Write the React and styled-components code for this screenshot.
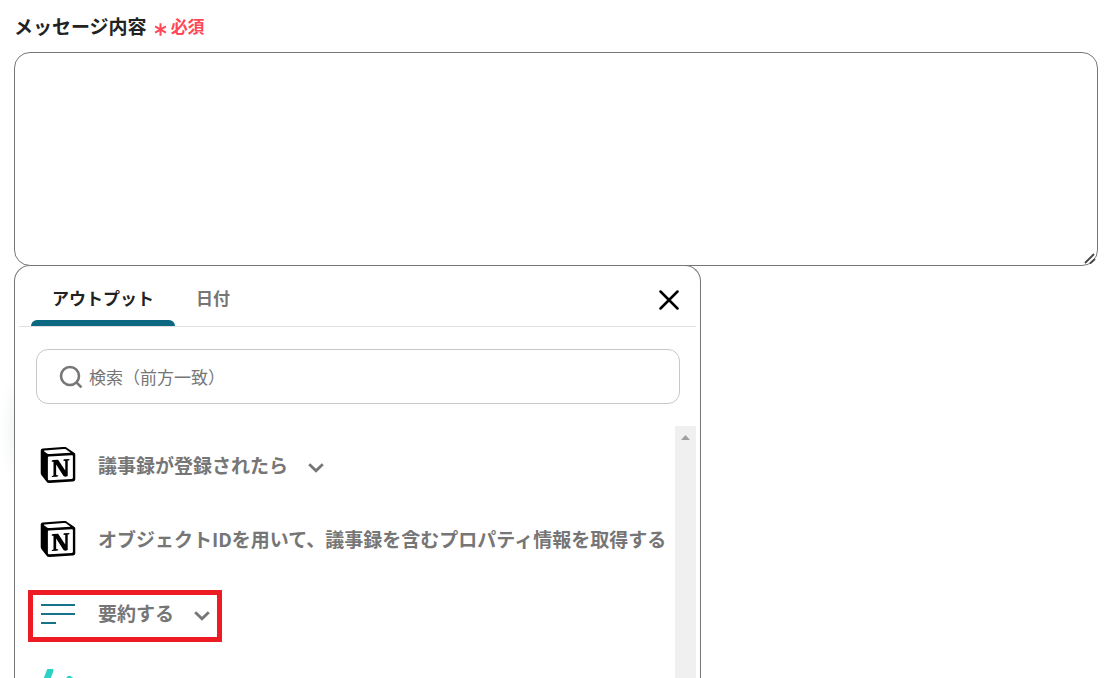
import React, { useState } from 'react';
import styled, { createGlobalStyle } from 'styled-components';
import { SiNotion } from 'react-icons/si';

const GlobalStyle = createGlobalStyle`
  *, *::before, *::after {
    box-sizing: border-box;
  }

  body {
    margin: 0;
    background: #fff;
    color: #222;
    font-family: 'Noto Sans CJK JP', sans-serif;
  }
`;

const Page = styled.main`
  display: flex;
  flex-direction: column;
  height: 100vh;
  padding: 12px 11px 0 14px;
  overflow: hidden;
  background: radial-gradient(ellipse 16px 60px at 16px 430px, #f2f5f4, #fff);
`;

const FieldHeader = styled.div`
  display: flex;
  flex: none;
  align-items: center;
  gap: 7px;
  height: 28px;
  margin-bottom: 12px;
`;

const FieldLabel = styled.label`
  font-size: 19px;
  line-height: 28px;
  font-weight: 700;
`;

const Required = styled.span`
  display: flex;
  align-items: center;
  gap: 4px;
  color: #ff4757;
  font-size: 17px;
  line-height: 28px;
  font-weight: 700;

  svg {
    margin-top: 6px;
  }
`;

const MessageBox = styled.div`
  position: relative;
  display: flex;
  flex: none;
`;

const MessageInput = styled.textarea`
  width: 100%;
  height: 214px;
  padding: 16px;
  border: 1px solid #767676;
  border-radius: 16px;
  background: #fff;
  font: inherit;
  font-size: 17px;
  resize: none;
  outline: none;
`;

const Grip = styled.svg`
  position: absolute;
  right: 1px;
  bottom: 1px;
  pointer-events: none;
`;

const Panel = styled.section`
  display: flex;
  flex: 1;
  flex-direction: column;
  width: 100%;
  max-width: 687px;
  min-height: 0;
  margin-top: -1px;
  padding: 0 4px;
  border: 1px solid #767676;
  border-bottom: 0;
  border-radius: 16px 16px 0 0;
  background: #fff;
`;

const PanelHeader = styled.header`
  display: flex;
  flex: none;
  align-items: stretch;
  justify-content: space-between;
  height: 61px;
  padding: 0 12px;
  border-bottom: 1px solid #e0e0e0;
`;

const Tabs = styled.div`
  display: flex;
`;

const Tab = styled.button`
  display: flex;
  flex-direction: column;
  padding: 0;
  border: 0;
  background: none;
  color: ${({ $active }) => ($active ? '#222' : '#767676')};
  font-family: inherit;
  font-size: 17px;
  line-height: 54px;
  font-weight: 700;
  cursor: pointer;

  span {
    padding: 5px 21px 0;
    margin-bottom: -5px;
  }

  &::after {
    content: '';
    width: 100%;
    height: 6px;
    border-radius: 6px 6px 0 0;
    background: ${({ $active }) => ($active ? '#0b6880' : 'transparent')};
  }
`;

const CloseButton = styled.button`
  display: flex;
  align-items: center;
  padding: 8px 5px 0;
  border: 0;
  background: none;
  color: #000;
  cursor: pointer;
`;

const SearchBox = styled.label`
  display: flex;
  flex: none;
  align-items: center;
  gap: 6px;
  height: 55px;
  margin: 22px 16px 22px 17px;
  padding: 0 22px;
  border: 1px solid #c8c8c8;
  border-radius: 12px;
  color: #767676;
`;

const SearchInput = styled.input`
  flex: 1;
  min-width: 0;
  padding: 0;
  border: 0;
  background: none;
  color: #222;
  font-family: inherit;
  font-size: 17px;
  line-height: 24px;
  outline: none;

  &::placeholder {
    color: #767676;
    opacity: 1;
  }
`;

const ListArea = styled.div`
  display: flex;
  flex: 1;
  gap: 4px;
  min-height: 0;
  overflow: hidden;
`;

const OutputList = styled.ul`
  flex: 1;
  min-width: 0;
  margin: 0;
  padding: 2px 0 0 9px;
  overflow: hidden;
  list-style: none;
`;

const OutputItem = styled.li`
  position: relative;
  height: 74px;
`;

const OutputButton = styled.button`
  display: flex;
  align-items: center;
  gap: 22px;
  height: 100%;
  padding: 0 12px;
  border: 0;
  background: none;
  color: #767676;
  font-family: inherit;
  font-size: 19px;
  line-height: 28px;
  font-weight: 700;
  white-space: nowrap;
  cursor: pointer;

  svg {
    flex: none;
  }
`;

const OutputName = styled.span`
  display: flex;
  align-items: center;
  gap: 20px;

  svg {
    margin-top: 6px;
  }
`;

const Highlight = styled.span`
  position: absolute;
  inset: 14px auto auto 0;
  width: 194px;
  height: 52px;
  border: 5px solid #ed1c24;
  pointer-events: none;
`;

const ScrollTrack = styled.div`
  display: flex;
  flex: none;
  justify-content: center;
  width: 21px;
  padding-top: 9px;
  background: #f0f0f0;
`;

const NotionIcon = styled(SiNotion)`
  width: 36px;
  height: 36px;
  color: #000;
`;

const AsteriskIcon = () => (
  <svg width="13" height="13" viewBox="0 0 13 13" stroke="currentColor" strokeWidth="2" aria-hidden="true">
    <path d="M6.5 0.3v12.4M1.1 3.4l10.8 6.2M11.9 3.4L1.1 9.6" />
  </svg>
);

const CloseIcon = () => (
  <svg width="20" height="20" viewBox="0 0 20 20" stroke="currentColor" strokeWidth="2.5" strokeLinecap="round" aria-hidden="true">
    <path d="M1.5 1.5l17 17M18.5 1.5l-17 17" />
  </svg>
);

const SearchIcon = () => (
  <svg width="24" height="24" viewBox="0 0 24 24" fill="none" stroke="currentColor" strokeWidth="2.6" aria-hidden="true">
    <circle cx="11" cy="11" r="9" />
    <path d="M17.2 17.2l5.2 5.2" />
  </svg>
);

const ChevronIcon = () => (
  <svg width="16" height="10" viewBox="0 0 16 10" fill="none" stroke="currentColor" strokeWidth="2.8" aria-hidden="true">
    <path d="M1.2 1.2L8 7.8l6.8-6.6" />
  </svg>
);

const SummaryIcon = () => (
  <svg width="36" height="36" viewBox="0 0 36 36" stroke="#17738a" strokeWidth="2" aria-hidden="true">
    <path d="M1 10h34M1 19h34M1 28h15" />
  </svg>
);

const ChatIcon = () => (
  <svg width="36" height="36" viewBox="0 0 36 36" fill="none" stroke="#2bd2c5" strokeLinecap="round" aria-hidden="true">
    <path d="M10 2L4.5 16" strokeWidth="6.5" />
    <path d="M29.5 10.5L26 19" strokeWidth="7" />
  </svg>
);

const outputs = [
  { id: 'trigger', name: '議事録が登録されたら', icon: NotionIcon },
  { id: 'properties', name: 'オブジェクトIDを用いて、議事録を含むプロパティ情報を取得する', icon: NotionIcon },
  { id: 'summary', name: '要約する', icon: SummaryIcon, highlighted: true },
  { id: 'chat', icon: ChatIcon },
];

const tabs = ['アウトプット', '日付'];

const App = () => {
  const [activeTab, setActiveTab] = useState(tabs[0]);
  const [message, setMessage] = useState('');
  const [query, setQuery] = useState('');

  return (
    <Page>
      <GlobalStyle />
      <FieldHeader>
        <FieldLabel htmlFor="message">メッセージ内容</FieldLabel>
        <Required>
          <AsteriskIcon />
          必須
        </Required>
      </FieldHeader>

      <MessageBox>
        <MessageInput id="message" value={message} onChange={(e) => setMessage(e.target.value)} />
        <Grip width="13" height="13" viewBox="0 0 13 13" stroke="#444" strokeWidth="1.8">
          <path d="M1 11L10 2M6 11.5L11 7" />
        </Grip>
      </MessageBox>

      <Panel>
        <PanelHeader>
          <Tabs role="tablist">
            {tabs.map((tab) => (
              <Tab
                key={tab}
                type="button"
                role="tab"
                aria-selected={tab === activeTab}
                $active={tab === activeTab}
                onClick={() => setActiveTab(tab)}
              >
                <span>{tab}</span>
              </Tab>
            ))}
          </Tabs>
          <CloseButton type="button" aria-label="閉じる">
            <CloseIcon />
          </CloseButton>
        </PanelHeader>

        <SearchBox>
          <SearchIcon />
          <SearchInput
            type="text"
            aria-label="検索"
            placeholder="検索（前方一致）"
            value={query}
            onChange={(e) => setQuery(e.target.value)}
          />
        </SearchBox>

        <ListArea>
          <OutputList>
            {outputs.map(({ id, name, icon: Icon, highlighted }) => (
              <OutputItem key={id}>
                <OutputButton type="button">
                  <Icon />
                  {name && (
                    <OutputName>
                      {name}
                      <ChevronIcon />
                    </OutputName>
                  )}
                </OutputButton>
                {highlighted && <Highlight />}
              </OutputItem>
            ))}
          </OutputList>
          <ScrollTrack>
            <svg width="9" height="5" viewBox="0 0 9 5" fill="#a0a0a0" aria-hidden="true">
              <path d="M0 5L4.5 0L9 5z" />
            </svg>
          </ScrollTrack>
        </ListArea>
      </Panel>
    </Page>
  );
};

export default App;
